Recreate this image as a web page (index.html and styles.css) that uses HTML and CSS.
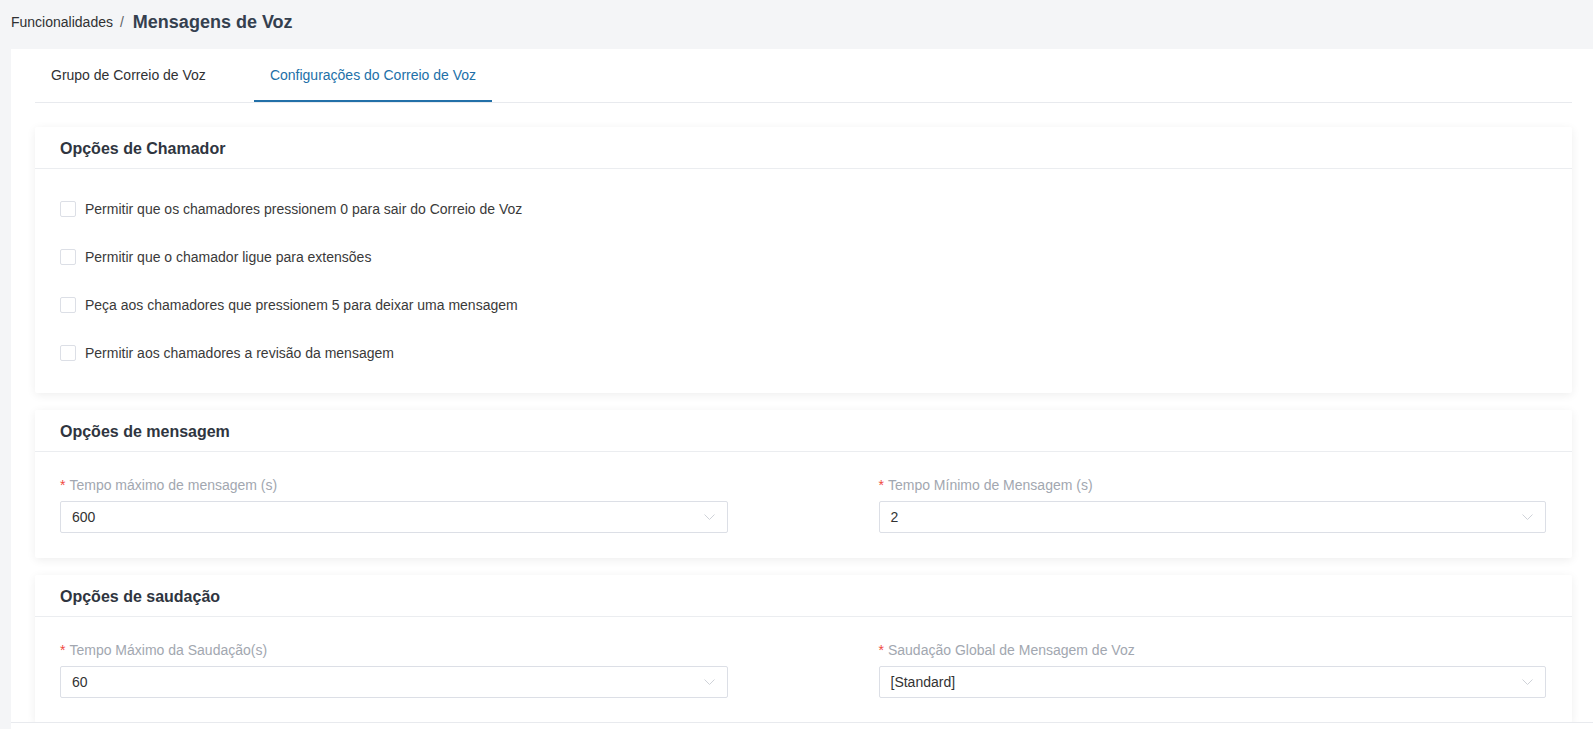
FILE: index.html
```html
<!DOCTYPE html>
<html lang="pt">
<head>
    <meta charset="UTF-8">
    <meta name="viewport" content="width=device-width, initial-scale=1.0">
    <title>Mensagens de Voz</title>
    <link rel="stylesheet" href="styles.css">
</head>
<body>
    <div class="breadcrumb">
        <span class="crumb">Funcionalidades</span>
        <span class="sep">/</span>
        <span class="page-title">Mensagens de Voz</span>
    </div>

    <div class="panel">
        <div class="tabs">
            <div class="tab">Grupo de Correio de Voz</div>
            <div class="tab active">Configurações do Correio de Voz</div>
        </div>

        <div class="cards">
            <div class="card">
                <div class="card-header">Opções de Chamador</div>
                <div class="card-body checks">
                    <label class="check"><span class="box"></span>Permitir que os chamadores pressionem 0 para sair do Correio de Voz</label>
                    <label class="check"><span class="box"></span>Permitir que o chamador ligue para extensões</label>
                    <label class="check"><span class="box"></span>Peça aos chamadores que pressionem 5 para deixar uma mensagem</label>
                    <label class="check"><span class="box"></span>Permitir aos chamadores a revisão da mensagem</label>
                </div>
            </div>

            <div class="card">
                <div class="card-header">Opções de mensagem</div>
                <div class="card-body form-grid">
                    <div class="field">
                        <div class="label"><span class="req">*</span>Tempo máximo de mensagem (s)</div>
                        <div class="select">
                            <span>600</span>
                            <svg width="11" height="6" viewBox="0 0 11 6"><polyline points="0.5,0.5 5.5,5.5 10.5,0.5" fill="none" stroke="#cfd2d8" stroke-width="1"/></svg>
                        </div>
                    </div>
                    <div class="field">
                        <div class="label"><span class="req">*</span>Tempo Mínimo de Mensagem (s)</div>
                        <div class="select">
                            <span>2</span>
                            <svg width="11" height="6" viewBox="0 0 11 6"><polyline points="0.5,0.5 5.5,5.5 10.5,0.5" fill="none" stroke="#cfd2d8" stroke-width="1"/></svg>
                        </div>
                    </div>
                </div>
            </div>

            <div class="card">
                <div class="card-header">Opções de saudação</div>
                <div class="card-body form-grid">
                    <div class="field">
                        <div class="label"><span class="req">*</span>Tempo Máximo da Saudação(s)</div>
                        <div class="select">
                            <span>60</span>
                            <svg width="11" height="6" viewBox="0 0 11 6"><polyline points="0.5,0.5 5.5,5.5 10.5,0.5" fill="none" stroke="#cfd2d8" stroke-width="1"/></svg>
                        </div>
                    </div>
                    <div class="field">
                        <div class="label"><span class="req">*</span>Saudação Global de Mensagem de Voz</div>
                        <div class="select">
                            <span>[Standard]</span>
                            <svg width="11" height="6" viewBox="0 0 11 6"><polyline points="0.5,0.5 5.5,5.5 10.5,0.5" fill="none" stroke="#cfd2d8" stroke-width="1"/></svg>
                        </div>
                    </div>
                </div>
            </div>
        </div>

        <div class="footer"></div>
    </div>
</body>
</html>
```

FILE: styles.css
```css
html, body {
    height: 100%;
}
body {
    margin: 0;
    overflow: hidden;
    background-color: #f4f5f7;
    font-family: "Liberation Sans", Arial, sans-serif;
    font-size: 14px;
    color: #333;
}
.breadcrumb {
    height: 44px;
    margin-bottom: 5px;
    padding: 0 11px;
    display: flex;
    align-items: center;
}
.crumb {
    color: #303133;
}
.sep {
    color: #606266;
    margin: 0 9px 0 7px;
}
.page-title {
    font-size: 18px;
    font-weight: bold;
    color: #34404f;
}
.panel {
    position: relative;
    margin-left: 11px;
    height: 680px;
    padding: 0 21px 0 24px;
    background-color: #fff;
    overflow: hidden;
}
.tabs {
    display: flex;
    border-bottom: 1px solid #e8eaee;
}
.tab {
    padding: 1px 16px 0;
    line-height: 50px;
    margin-right: 32px;
    border-bottom: 2px solid transparent;
    color: #303133;
}
.tab.active {
    color: #2270a8;
    border-bottom-color: #2270a8;
}
.cards {
    display: flex;
    flex-direction: column;
    gap: 17px;
    margin-top: 24px;
}
.card {
    background-color: #fff;
    border-radius: 2px;
    box-shadow: 0 2px 10px 0 rgba(0, 0, 0, 0.07);
}
.card-header {
    height: 41px;
    line-height: 43px;
    padding: 0 25px;
    border-bottom: 1px solid #ebedf0;
    font-size: 16px;
    font-weight: bold;
    color: #2f3540;
}
.checks {
    display: flex;
    flex-direction: column;
    gap: 28px;
    padding: 30px 25px 30px;
}
.check {
    display: flex;
    align-items: center;
    line-height: 20px;
    color: #3a3a3a;
}
.box {
    width: 14px;
    height: 14px;
    border: 1px solid #dcdfe6;
    border-radius: 2px;
    margin-right: 9px;
    background-color: #fff;
}
.form-grid {
    display: grid;
    grid-template-columns: 1fr 1fr;
    column-gap: 151px;
    padding: 23px 26px 25px 25px;
}
.label {
    line-height: 20px;
    color: #a2a7b0;
    margin-bottom: 6px;
}
.req {
    color: #f04a3e;
    margin-right: 4px;
}
.select {
    height: 30px;
    border: 1px solid #dcdfe6;
    border-radius: 2px;
    padding: 0 12px 0 11px;
    display: flex;
    align-items: center;
    justify-content: space-between;
    color: #333;
}
.footer {
    position: absolute;
    left: 0;
    right: 0;
    bottom: 0;
    height: 6px;
    border-top: 1px solid #e8eaee;
    background-color: #fff;
}
```
